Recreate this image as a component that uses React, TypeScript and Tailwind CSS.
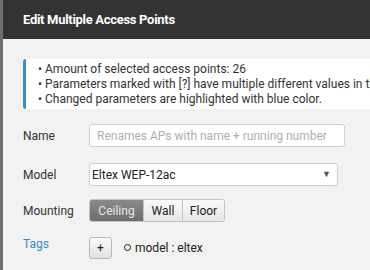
const labelClass = "w-[66px] shrink-0 text-[12px] text-[#333]";

function Row({ label, children, blue }: { label: string; children: React.ReactNode; blue?: boolean }) {
    return (
        <div className="flex items-center">
            <span className={blue ? "w-[66px] shrink-0 text-[12px] text-[#3b8cc6] -mt-2" : labelClass}>{label}</span>
            {children}
        </div>
    );
}

export default function App() {
    return (
        <div className="w-[370px] h-[270px] flex overflow-hidden bg-[#6f6f6f] font-['Roboto',sans-serif]">
            <div className="ml-[3px] flex-1 flex flex-col min-w-0">
                <div className="h-[39px] bg-[#333333] flex items-center pl-5 shrink-0">
                    <h1 className="text-white text-[13px] font-bold tracking-[-0.3px]">Edit Multiple Access Points</h1>
                </div>
                <div className="flex-1 bg-[#f2f2f2] pl-5 pt-5">
                    <div className="h-[50px] -mr-4 bg-white rounded-l-[3px] border-l-[3px] border-[#3a8fd2] pl-3 pt-[3px] text-[12px] leading-[15px] text-[#333] whitespace-nowrap overflow-hidden">
                        <p>• Amount of selected access points: 26</p>
                        <p>• Parameters marked with [?] have multiple different values in the selection.</p>
                        <p>• Changed parameters are highlighted with blue color.</p>
                    </div>

                    <div className="flex flex-col mt-[15px] gap-4">
                        <Row label="Name">
                            <input
                                className="w-[256px] h-[23px] rounded-[3px] border border-[#cfcfcf] bg-white px-[7px] text-[12px] text-[#333] placeholder:text-[#b0b0b0] outline-none"
                                placeholder="Renames APs with name + running number"
                            />
                        </Row>
                        <Row label="Model">
                            <div className="w-[249px] h-[23px] rounded-[3px] border border-[#cfcfcf] bg-white pl-[2px] pr-[6px] flex items-center justify-between text-[12px] text-[#222]">
                                <span>Eltex WEP-12ac</span>
                                <span className="text-[9px] text-[#555]">▼</span>
                            </div>
                        </Row>
                        <div className="-mt-[3px]">
                            <Row label="Mounting">
                                <div className="flex h-[23px] rounded-[3px] border border-[#c4c4c4] overflow-hidden text-[12px]">
                                    <button className="w-[53px] bg-gradient-to-b from-[#8a8a8a] to-[#6d6d6d] text-[#e8e8e8]">Ceiling</button>
                                    <button className="w-[39px] bg-gradient-to-b from-[#fafafa] to-[#e6e6e6] text-[#222] border-l border-[#c4c4c4]">Wall</button>
                                    <button className="w-[42px] bg-gradient-to-b from-[#fafafa] to-[#e6e6e6] text-[#222] border-l border-[#c4c4c4]">Floor</button>
                                </div>
                            </Row>
                        </div>
                        <div className="-mt-px">
                            <Row label="Tags" blue>
                                <button className="w-[23px] h-[22px] rounded-[3px] border border-[#b8b8b8] bg-gradient-to-b from-[#fafafa] to-[#e2e2e2] text-[12px] text-[#222] leading-none">+</button>
                                <span className="ml-3 text-[12px] text-[#222]">
                                    <span className="inline-block w-[7px] h-[7px] rounded-full border-[1.5px] border-[#222] mr-[4px] align-middle -mt-[2px]"></span>
                                    model : eltex
                                </span>
                            </Row>
                        </div>
                    </div>
                </div>
            </div>
        </div>
    );
}
